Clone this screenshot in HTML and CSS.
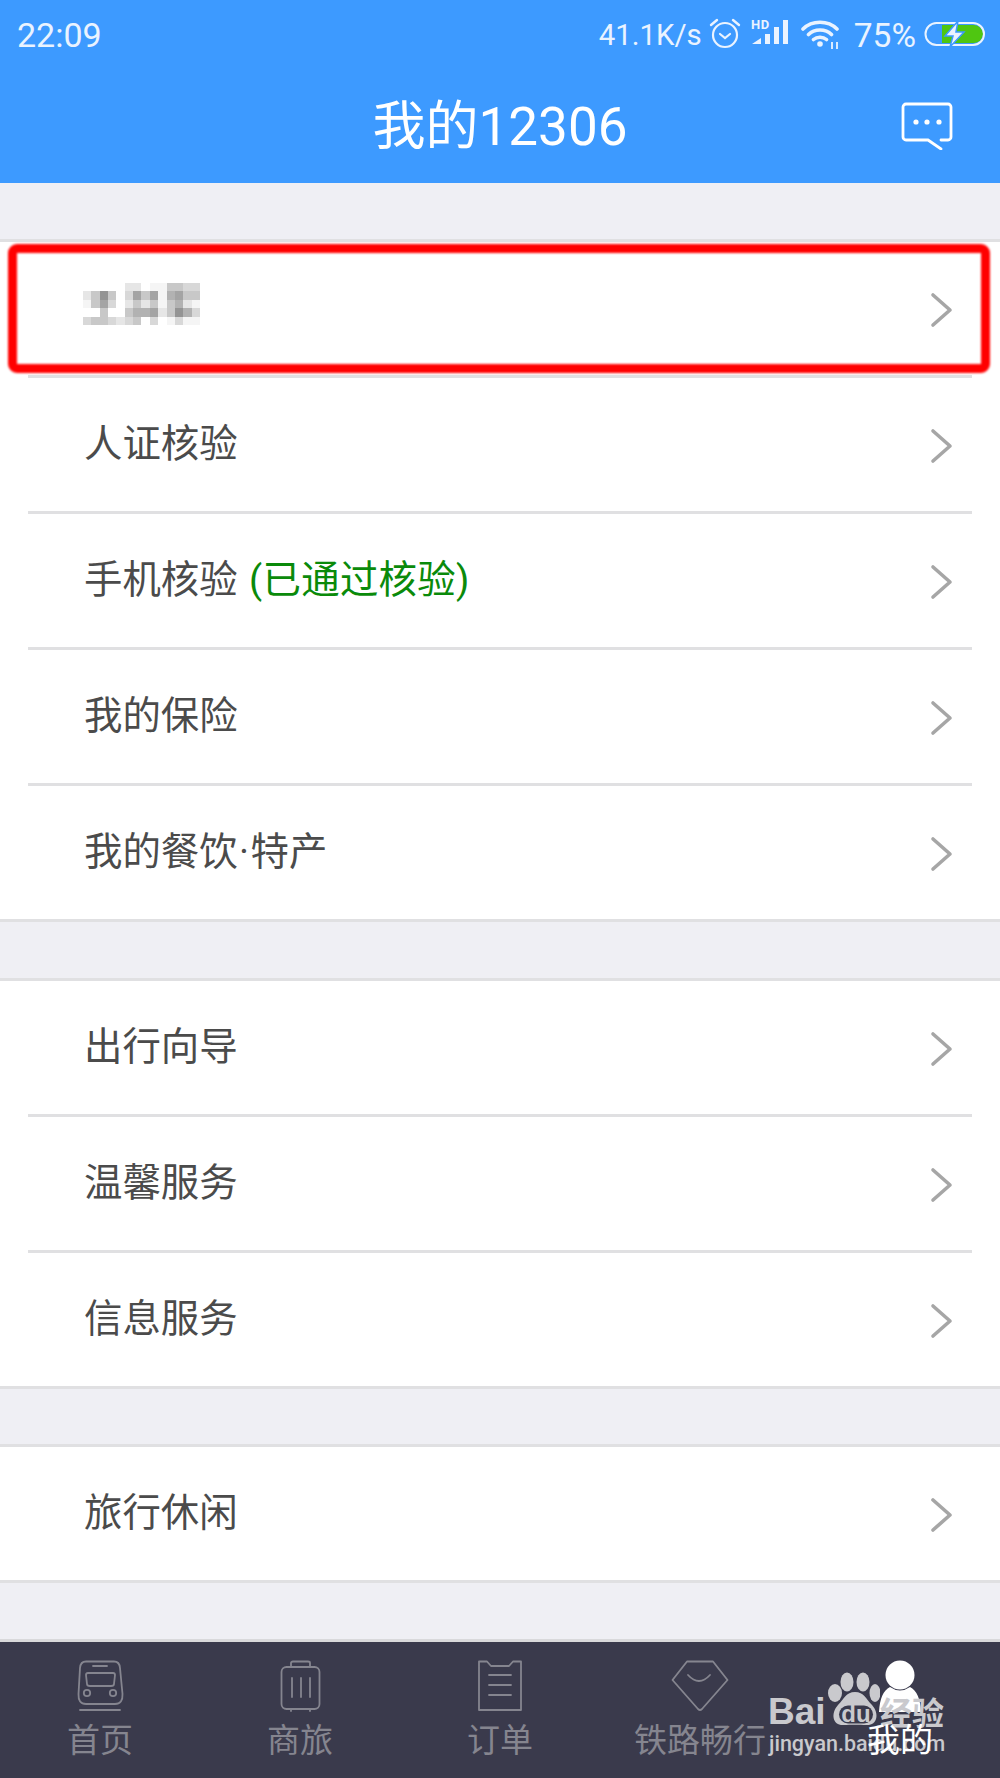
FILE: index.html
```html
<!DOCTYPE html>
<html lang="zh-CN">
<head>
<meta charset="utf-8">
<title>我的12306</title>
<link rel="stylesheet" href="styles.css">
</head>
<body>
<svg class="defs" width="0" height="0" aria-hidden="true">
  <symbol id="chev" viewBox="0 0 24 36"><path d="M3 3 L20 18 L3 33" fill="none" stroke="#a6a6a6" stroke-width="3.6" stroke-linecap="round" stroke-linejoin="round"/></symbol>
</svg>
<div class="app">
  <header class="top">
    <div class="status">
      <span class="time">22:09</span>
      <div class="status-right">
        <span class="speed">41.1K/s</span>
        <svg class="ic-alarm" width="32" height="32" viewBox="0 0 32 32"><circle cx="16" cy="18" r="12" fill="none" stroke="#eaf3ff" stroke-width="2.2"/><path d="M11 17 L16 21 L21 17" fill="none" stroke="#eaf3ff" stroke-width="2.2" stroke-linecap="round"/><path d="M2 8 L8 3 M24 3 L30 8" stroke="#eaf3ff" stroke-width="2.4" stroke-linecap="round"/></svg>
        <svg class="ic-signal" width="38" height="28" viewBox="0 0 38 28"><path d="M1 26 L10 20 V26 Z M14 16 H19 V26 H14 Z M23 9 H28 V26 H23 Z M32 2 H37 V26 H32 Z" fill="#eaf3ff"/><text x="0" y="10.500" class="hd">HD</text></svg>
        <svg class="ic-wifi" width="38" height="30" viewBox="0 0 38 30"><path d="M2 9 C11 0 27 0 36 9 M7.500 14.500 C13.500 8.500 24.500 8.500 30.500 14.500 M12.500 19.500 C16 16.500 22 16.500 25.500 19.500" fill="none" stroke="#eaf3ff" stroke-width="3.600" stroke-linecap="round"/><circle cx="19" cy="24" r="2.800" fill="#eaf3ff"/><path d="M31 22 V29 M36 22 V29" stroke="#eaf3ff" stroke-width="1.800"/></svg>
        <span class="pct">75%</span>
        <svg class="ic-batt" width="61" height="28" viewBox="0 0 61 28"><path d="M18 5 H50 A9 9 0 0 1 50 23 H18 Z" fill="#4fc611"/><path d="M1.500 14 A11 11 0 0 1 12.500 3 H49 A11 11 0 0 1 49 25 H12.500 A11 11 0 0 1 1.500 14 Z" fill="none" stroke="#eaf3ff" stroke-width="2"/><path d="M34 1 L21 16 H29 L26 27 L40 12 H32 Z" fill="#eaf3ff" stroke="#3d9aff" stroke-width="1.500"/></svg>
      </div>
    </div>
    <div class="nav">
      <h1 class="title">我的12306</h1>
      <svg class="ic-chat" width="52" height="48" viewBox="0 0 52 48"><path d="M27 38 H5 A3 3 0 0 1 2 35 V5 A3 3 0 0 1 5 2 H47 A3 3 0 0 1 50 5 V35 A3 3 0 0 1 47 38 H40 M27 38 L40 47" fill="none" stroke="#fff" stroke-width="2.800" stroke-linecap="round" stroke-linejoin="round"/><circle cx="15" cy="20" r="2.600" fill="#fff"/><circle cx="26" cy="20" r="2.600" fill="#fff"/><circle cx="38" cy="20" r="2.600" fill="#fff"/></svg>
    </div>
  </header>

  <main class="content">
    <section class="group group-first">
      <a class="row">
        <svg class="mosaic" width="117" height="42" viewBox="0 0 14 5" shape-rendering="crispEdges">
          <path fill="#f5f5f5" d="M8 0h2v1H8zM9 1h1v1H9zM9 2h1v1H9zM0 2h1v1H0zM13 2h1v1h-1zM10 4h1v1h-1zM12 4h2v1h-2z"/>
          <path fill="#e6e6e6" d="M0 1h1v1H0zM5 0h2v1H5zM5 2h1v1H5zM7 2h1v1H7zM12 2h1v1h-1zM9 3h1v1H9zM4 4h1v1H4z"/>
          <path fill="#d8d8d8" d="M12 0h2v1h-2zM5 1h1v1H5zM3 2h1v1H3zM13 3h1v1h-1zM0 4h1v1H0zM3 4h1v1H3zM5 4h1v1H5zM8 4h1v1H8zM11 4h1v1h-1z"/>
          <path fill="#c8c8c8" d="M10 0h2v1h-2zM1 1h1v1H1zM3 1h1v1H3zM7 1h1v1H7zM12 1h2v1h-2zM1 2h1v1H1zM6 2h1v1H6zM8 2h1v1H8zM10 2h1v1h-1zM2 3h1v1H2zM5 3h1v1H5zM10 3h1v1h-1zM1 4h2v1H1zM6 4h1v1H6z"/>
          <path fill="#b2b2b2" d="M10 1h1v1h-1zM11 2h1v1h-1zM6 3h2v1H6zM12 3h1v1h-1z"/>
          <path fill="#a4a4a4" d="M6 1h1v1H6zM8 1h1v1H8zM11 1h1v1h-1zM2 2h1v1H2zM8 3h1v1H8z"/>
          <path fill="#949494" d="M2 1h1v1H2zM11 3h1v1h-1z"/>
        </svg>
        <svg class="chev"><use href="#chev"/></svg>
      </a>
      <a class="row"><span class="label">人证核验</span><svg class="chev"><use href="#chev"/></svg></a>
      <a class="row"><span class="label">手机核验 <em class="ok">(已通过核验)</em></span><svg class="chev"><use href="#chev"/></svg></a>
      <a class="row"><span class="label">我的保险</span><svg class="chev"><use href="#chev"/></svg></a>
      <a class="row"><span class="label">我的餐饮<span class="dot">·</span>特产</span><svg class="chev"><use href="#chev"/></svg></a>
    </section>
    <section class="group">
      <a class="row"><span class="label">出行向导</span><svg class="chev"><use href="#chev"/></svg></a>
      <a class="row"><span class="label">温馨服务</span><svg class="chev"><use href="#chev"/></svg></a>
      <a class="row"><span class="label">信息服务</span><svg class="chev"><use href="#chev"/></svg></a>
    </section>
    <section class="group">
      <a class="row"><span class="label">旅行休闲</span><svg class="chev"><use href="#chev"/></svg></a>
    </section>
  </main>

  <nav class="tabs">
    <a class="tab">
      <svg class="tab-ic" width="60" height="52" viewBox="0 0 60 52" fill="none" stroke="#85858f" stroke-width="1.800" stroke-linecap="round"><path d="M16 1.500 H44 Q49.500 1.500 50 8 L52.500 34 Q53 44 45 44 H16 Q8 44 8.500 34 L10 8 Q10.500 1.500 16 1.500 Z"/><path d="M23 6 H37"/><path d="M18 13 H43 Q45 13 45 15 L44 24 Q44 26 41 26 H20 Q17 26 17 24 L16 15 Q16 13 18 13 Z"/><circle cx="17" cy="33" r="3.200"/><circle cx="43" cy="33" r="3.200"/><path d="M10 50 H50"/></svg>
      <span class="tab-label">首页</span>
    </a>
    <a class="tab">
      <svg class="tab-ic" width="60" height="52" viewBox="0 0 60 52" fill="none" stroke="#85858f" stroke-width="1.800" stroke-linecap="round"><path d="M21 7 V3 Q21 1.500 23 1.500 H38 Q40 1.500 40 3 V7"/><rect x="11.500" y="7" width="38" height="42" rx="5"/><path d="M22 18 V37 M31 18 V37 M40 18 V37"/><path d="M21 49 V51 M40 49 V51"/></svg>
      <span class="tab-label">商旅</span>
    </a>
    <a class="tab">
      <svg class="tab-ic" width="60" height="52" viewBox="0 0 60 52" fill="none" stroke="#85858f" stroke-width="1.800" stroke-linecap="round" stroke-linejoin="round"><path d="M9 1.500 H17 L21 6 H39 L43 1.500 H51 V50 H9 Z"/><path d="M19 15 H41 M19 25 H41 M19 35 H41"/></svg>
      <span class="tab-label">订单</span>
    </a>
    <a class="tab">
      <svg class="tab-ic" width="60" height="52" viewBox="0 0 60 52" fill="none" stroke="#85858f" stroke-width="1.800" stroke-linecap="round" stroke-linejoin="round"><path d="M17 1.500 H43 L57.500 20 L32 49 Q30 51 28 49 L2.500 20 Z"/><path d="M18 15 Q29 27 40 15"/></svg>
      <span class="tab-label">铁路畅行</span>
    </a>
    <a class="tab tab-on">
      <svg class="tab-ic" width="60" height="52" viewBox="0 0 60 52"><circle cx="30" cy="15" r="14.500" fill="#fff"/><path d="M9 52 Q10 32 20 27 Q30 34 40 27 Q50 32 51 52 Z" fill="#fff"/></svg>
      <span class="tab-label">我的</span>
    </a>
  </nav>

  <div class="highlight"></div>

  <div class="mark">
    <span class="mark-bai">Bai</span>
    <svg class="mark-paw" width="52" height="54" viewBox="0 0 52 54"><g fill="#c9c9cd"><ellipse cx="7" cy="21" rx="7" ry="9"/><ellipse cx="19" cy="10" rx="6.500" ry="9.500"/><ellipse cx="35" cy="10" rx="6.500" ry="9.500"/><ellipse cx="47" cy="21" rx="5.500" ry="9"/><path d="M27 20 C36 20 38 27 44 33 C52 42 49 54 38 53 C32 52.500 22 52.500 16 53 C5 54 2 42 10 33 C16 27 18 20 27 20 Z"/></g><rect x="11" y="33.500" width="34" height="18" rx="9" fill="#3a3a4c"/><text x="28" y="50" class="mark-du">du</text></svg>
    <span class="mark-jy">经验</span>
    <div class="mark-url">jingyan.baidu.com</div>
  </div>
</div>
</body>
</html>
```

FILE: styles.css
```css
* { box-sizing: border-box; }
html, body { margin: 0; padding: 0; }
body { font-family: Roboto, "Noto Sans CJK SC", "Noto Sans", sans-serif; background: #efeff4; }
.defs { position: absolute; }
.app { position: relative; width: 1000px; height: 1778px; display: flex; flex-direction: column; overflow: hidden; }

.top { height: 183px; background: #3d9aff; color: #fff; flex: none; display: flex; flex-direction: column; }
.status { height: 70px; padding: 0 15px 0 17px; display: flex; align-items: center; justify-content: space-between; color: #eaf3ff; font-family: Roboto, sans-serif; }
.time { font-size: 34px; }
.status-right { display: flex; align-items: center; }
.speed { font-size: 29.400px; margin-right: 7px; }
.ic-alarm { margin-bottom: 4px; }
.ic-signal { margin-left: 10px; margin-right: 12px; margin-bottom: 6px; overflow: visible; }
.pct { font-size: 33.500px; margin-left: 15px; margin-right: 8px; }
.ic-batt { margin-bottom: 3px; }
.hd { font: bold 13px Roboto, sans-serif; letter-spacing: 0.5px; fill: #eaf3ff; }
.nav { flex: 1; position: relative; display: flex; align-items: center; justify-content: center; padding-top: 1px; }
.title { margin: 0; font-weight: 400; font-size: 53px; line-height: 60px; }
.ic-chat { position: absolute; left: 901px; top: 32px; }

.content { flex: 1; padding-top: 56px; display: flex; flex-direction: column; gap: 55px; }
.group { background: #fff; border-top: 3px solid #e0e0e2; border-bottom: 3px solid #e0e0e2; }
.group-first { margin-bottom: 1px; }
.row { height: 136px; margin: 0 28px; padding: 0 18px 0 56px; display: flex; align-items: center; justify-content: space-between; border-bottom: 3px solid #e0e0e2; }
.row:last-child { height: 133px; border-bottom: 0; }
.label { font-size: 38.400px; color: #4b4b4b; line-height: 50px; padding-bottom: 2px; }
.ok { font-style: normal; color: #0a8a0a; margin-left: 2px; letter-spacing: 0.3px; }
.dot { padding: 0 1.500px; }
.chev { width: 24px; height: 36px; flex: none; margin-top: 2px; }
.mosaic { filter: blur(0.7px); margin-bottom: 9px; margin-left: -1px; }

.tabs { height: 139px; flex: none; background: #3a3a4c; border-top: 3px solid #d9d9db; display: flex; }
.tab { flex: 1; display: flex; flex-direction: column; align-items: center; padding-top: 18px; }
.tab-ic { display: block; flex: none; }
.tab-label { font-size: 33px; line-height: 40px; margin-top: 9px; color: #85858f; white-space: nowrap; }
.tab-on .tab-label { color: #fff; position: relative; z-index: 2; }

.highlight { position: absolute; left: 8px; top: 244px; width: 982px; height: 129px; border: 9px solid #f00; border-radius: 9px; filter: blur(0.8px); }

.mark { position: absolute; left: 768px; top: 1666px; width: 180px; height: 92px; color: #c9c9cd; z-index: 1; }
.mark-bai { font: bold 37px/36px "Liberation Sans", sans-serif; position: absolute; left: 0; top: 28px; }
.mark-paw { position: absolute; left: 60px; top: 6px; }
.mark-du { font: bold 24px "Liberation Sans", sans-serif; fill: #c9c9cd; text-anchor: middle; }
.mark-jy { font-family: "Noto Sans CJK SC", sans-serif; font-size: 32px; line-height: 36px; font-weight: 700; position: absolute; left: 112px; top: 27px; white-space: nowrap; }
.mark-url { font: 500 21.500px/28px Roboto, sans-serif; position: absolute; left: 1px; top: 64px; white-space: nowrap; }
```
